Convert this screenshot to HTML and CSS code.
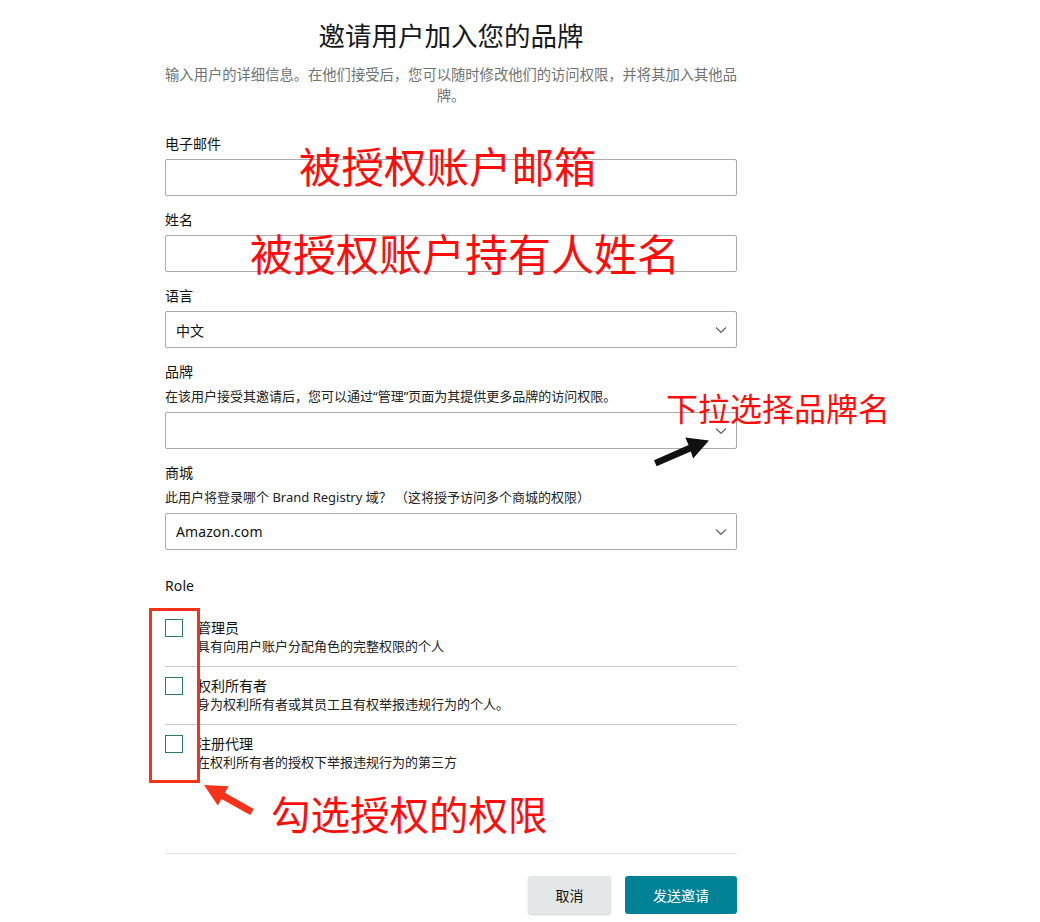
FILE: index.html
```html
<!DOCTYPE html>
<html lang="zh-CN">
<head>
<meta charset="utf-8">
<title>邀请用户加入您的品牌</title>
<link rel="stylesheet" href="styles.css">
</head>
<body>
<div class="page">
  <main class="form-wrap">
    <h1 class="title">邀请用户加入您的品牌</h1>
    <p class="subtitle">输入用户的详细信息。在他们接受后，您可以随时修改他们的访问权限，并将其加入其他品牌。</p>

    <div class="fields">
      <div class="field">
        <label class="label">电子邮件</label>
        <input class="input" type="text">
      </div>
      <div class="field">
        <label class="label">姓名</label>
        <input class="input" type="text">
      </div>
      <div class="field">
        <label class="label">语言</label>
        <div class="select">
          <span class="select-text">中文</span>
          <svg class="chev" width="12" height="8" viewBox="0 0 12 8"><polyline points="1,1.5 6,6.2 11,1.5" fill="none" stroke="#6b6f70" stroke-width="1.4"/></svg>
        </div>
      </div>
      <div class="field">
        <label class="label">品牌</label>
        <p class="desc">在该用户接受其邀请后，您可以通过“管理”页面为其提供更多品牌的访问权限。</p>
        <div class="select select-gap">
          <span class="select-text"></span>
          <svg class="chev" width="12" height="8" viewBox="0 0 12 8"><polyline points="1,1.5 6,6.2 11,1.5" fill="none" stroke="#6b6f70" stroke-width="1.4"/></svg>
        </div>
      </div>
      <div class="field">
        <label class="label">商城</label>
        <p class="desc">此用户将登录哪个 Brand Registry 域？ （这将授予访问多个商城的权限）</p>
        <div class="select select-gap">
          <span class="select-text latin">Amazon.com</span>
          <svg class="chev" width="12" height="8" viewBox="0 0 12 8"><polyline points="1,1.5 6,6.2 11,1.5" fill="none" stroke="#6b6f70" stroke-width="1.4"/></svg>
        </div>
      </div>
    </div>

    <section class="roles">
      <div class="label latin">Role</div>
      <ul class="role-list">
        <li class="role">
          <span class="checkbox"></span>
          <div class="role-text">
            <div class="role-name">管理员</div>
            <div class="role-desc">具有向用户账户分配角色的完整权限的个人</div>
          </div>
        </li>
        <li class="role">
          <span class="checkbox"></span>
          <div class="role-text">
            <div class="role-name">权利所有者</div>
            <div class="role-desc">身为权利所有者或其员工且有权举报违规行为的个人。</div>
          </div>
        </li>
        <li class="role">
          <span class="checkbox"></span>
          <div class="role-text">
            <div class="role-name">注册代理</div>
            <div class="role-desc">在权利所有者的授权下举报违规行为的第三方</div>
          </div>
        </li>
      </ul>
    </section>

    <footer class="actions">
      <button class="btn btn-cancel" type="button">取消</button>
      <button class="btn btn-send" type="button">发送邀请</button>
    </footer>
  </main>

  <div class="anno anno-email">被授权账户邮箱</div>
  <div class="anno anno-name">被授权账户持有人姓名</div>
  <div class="anno anno-brand">下拉选择品牌名</div>
  <div class="anno anno-role">勾选授权的权限</div>
  <div class="mark-box"></div>
  <svg class="arrows" width="1040" height="922" viewBox="0 0 1040 922">
    <polygon fill="#111" points="654,460.3 688.6,445.1 685.2,437.4 709,440.5 693.1,458.4 690.8,451.5 656.6,466.2"/>
    <polygon fill="#f5321a" points="253.7,808.9 224.9,792.7 228.6,786.2 204,785 217.8,805.4 221.5,798.9 250.3,815.1"/>
  </svg>
</div>
</body>
</html>
```

FILE: styles.css
```css
* { box-sizing: border-box; }

html, body {
  margin: 0;
  padding: 0;
  background: #ffffff;
}

body {
  font-family: "Noto Sans", "Noto Sans CJK SC", sans-serif;
  color: #0f1111;
}

.page {
  position: relative;
  width: 1040px;
  height: 922px;
  overflow: hidden;
}

.form-wrap {
  width: 572px;
  margin-left: 165px;
  padding-top: 18px;
}

.title {
  margin: 0;
  font-family: "Noto Sans CJK SC", sans-serif;
  font-weight: 400;
  font-size: 26.5px;
  line-height: 34px;
  text-align: center;
  color: #16191f;
}

.subtitle {
  margin: 12px 0 0;
  font-size: 14.3px;
  line-height: 21px;
  text-align: center;
  color: #6f7373;
}

.fields {
  margin-top: 28px;
  display: flex;
  flex-direction: column;
  gap: 14px;
}

.field {
  display: flex;
  flex-direction: column;
}

.label {
  display: block;
  font-size: 14px;
  line-height: 20px;
  color: #0f1111;
}

.desc {
  margin: 5px 0 0;
  font-size: 13px;
  line-height: 18px;
  color: #222;
}

.input {
  margin-top: 5px;
  width: 100%;
  height: 37px;
  border: 1px solid #a8abab;
  border-radius: 2px;
  background: #fff;
  font: inherit;
  outline: none;
}

.select {
  margin-top: 5px;
  height: 37px;
  border: 1px solid #a8abab;
  border-radius: 2px;
  display: flex;
  align-items: center;
  justify-content: space-between;
  padding: 0 9px 0 10px;
}

.select-gap { margin-top: 7px; }

.select-text {
  font-size: 14px;
  color: #0f1111;
}

.latin { letter-spacing: 0.1px; }

.chev { display: block; }

.roles {
  margin-top: 26px;
}

.role-list {
  list-style: none;
  margin: 13px 0 0;
  padding: 0;
}

.role {
  display: flex;
  align-items: flex-start;
  gap: 14px;
  padding: 10px 0 11px;
}

.role + .role {
  border-top: 1px solid #c6c9c9;
}

.checkbox {
  flex: none;
  width: 18px;
  height: 18px;
  border: 1px solid #2f7479;
  background: #fff;
}

.role-name {
  font-size: 14px;
  line-height: 18px;
  color: #0f1111;
}

.role-desc {
  font-size: 13px;
  line-height: 18px;
  color: #222;
}

.actions {
  margin-top: 71px;
  border-top: 1px solid #e3e6e6;
  padding-top: 22px;
  display: flex;
  justify-content: flex-end;
  gap: 14px;
}

.btn {
  height: 38px;
  border: none;
  border-radius: 3px;
  font-family: "Noto Sans CJK SC", sans-serif;
  font-size: 14px;
  cursor: pointer;
}

.btn-cancel {
  width: 83px;
  background: #e3e7e7;
  color: #0f1111;
  box-shadow: 0 1px 2px rgba(0, 0, 0, 0.18);
}

.btn-send {
  width: 112px;
  background: #008296;
  color: #ffffff;
}

/* annotations overlay */
.anno {
  position: absolute;
  font-family: "Noto Sans CJK SC", sans-serif;
  font-weight: 400;
  line-height: 1;
  color: #ff0d0d;
  white-space: nowrap;
}

.anno-email { left: 299px; top: 144px; font-size: 42.5px; }
.anno-name  { left: 250px; top: 231px; font-size: 43px; }
.anno-brand { left: 666px; top: 391px; font-size: 32px; }
.anno-role  { left: 271px; top: 793px; font-size: 39.5px; }

.mark-box {
  position: absolute;
  left: 149px;
  top: 608px;
  width: 51px;
  height: 175px;
  border: 3px solid #f5321a;
}

.arrows {
  position: absolute;
  left: 0;
  top: 0;
  pointer-events: none;
}
```
